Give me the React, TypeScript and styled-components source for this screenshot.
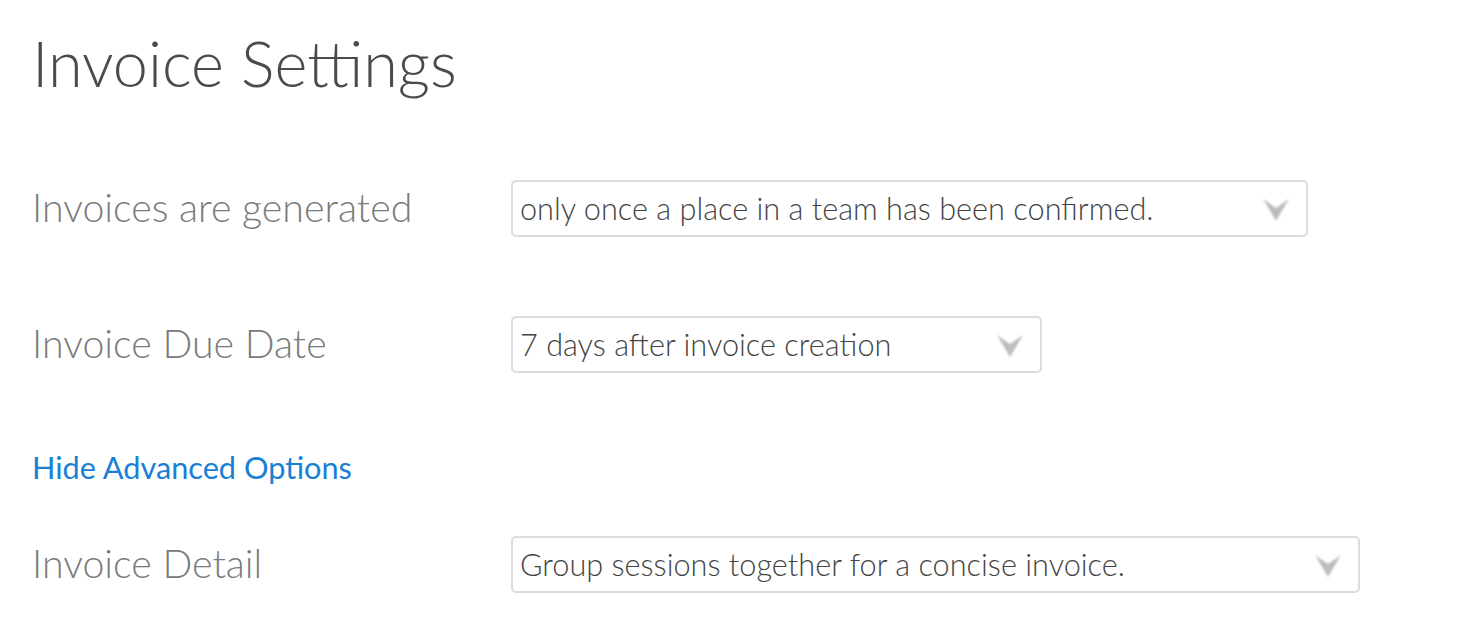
import React from 'react';
import styled, { createGlobalStyle } from 'styled-components';

const GlobalStyle = createGlobalStyle`
  html, body {
    margin: 0;
    padding: 0;
    background: #ffffff;
  }
  body {
    font-family: Lato, 'Open Sans', sans-serif;
  }
`;

const Page = styled.div`
  padding: 19px 32px 0 32px;
`;

const Title = styled.h1`
  font-family: Lato, sans-serif;
  font-weight: 300;
  font-size: 63px;
  line-height: 88px;
  color: #4b4b4b;
  margin: 0 0 73px 0;
`;

const Row = styled.div<{ $gap?: number }>`
  display: flex;
  align-items: center;
  margin-bottom: ${(p) => p.$gap ?? 0}px;
`;

const Label = styled.div`
  width: 479px;
  flex-shrink: 0;
  font-family: Lato, sans-serif;
  font-weight: 300;
  font-size: 39.3px;
  color: #7b7b7b;
  margin-top: -4px;
`;

const SelectBox = styled.div<{ $width: number }>`
  position: relative;
  box-sizing: border-box;
  width: ${(p) => p.$width}px;
  height: 57px;
  border: 2px solid #dcdcdc;
  border-radius: 5px;
  display: flex;
  align-items: center;
  padding: 0 60px 0 7px;
  font-family: Lato, sans-serif;
  font-weight: 300;
  font-size: 30.7px;
  color: #444444;
`;

const Chevron = styled.svg`
  position: absolute;
  right: 16px;
  top: 50%;
  transform: translateY(-50%);
  filter: blur(0.8px);
`;

const AdvancedLink = styled.a`
  display: inline-block;
  font-family: Lato, sans-serif;
  font-weight: 400;
  font-size: 30.7px;
  color: #1a80d5;
  text-decoration: none;
  margin-bottom: 50px;
  cursor: pointer;
`;

function Arrow() {
  return (
    <Chevron width="28" height="26" viewBox="0 0 28 26">
      <path d="M1 3 L14 12 L27 3 L14 25 Z" fill="#bdbdbd" />
    </Chevron>
  );
}

function Select({ value, width }: { value: string; width: number }) {
  return (
    <SelectBox $width={width}>
      {value}
      <Arrow />
    </SelectBox>
  );
}

export default function App(): React.ReactElement {
  return (
    <>
      <GlobalStyle />
      <Page>
        <Title>Invoice Settings</Title>
        <Row $gap={79}>
          <Label>Invoices are generated</Label>
          <Select value="only once a place in a team has been confirmed." width={797} />
        </Row>
        <Row $gap={76}>
          <Label>Invoice Due Date</Label>
          <Select value="7 days after invoice creation" width={531} />
        </Row>
        <AdvancedLink>Hide Advanced Options</AdvancedLink>
        <Row>
          <Label>Invoice Detail</Label>
          <Select value="Group sessions together for a concise invoice." width={849} />
        </Row>
      </Page>
    </>
  );
}
